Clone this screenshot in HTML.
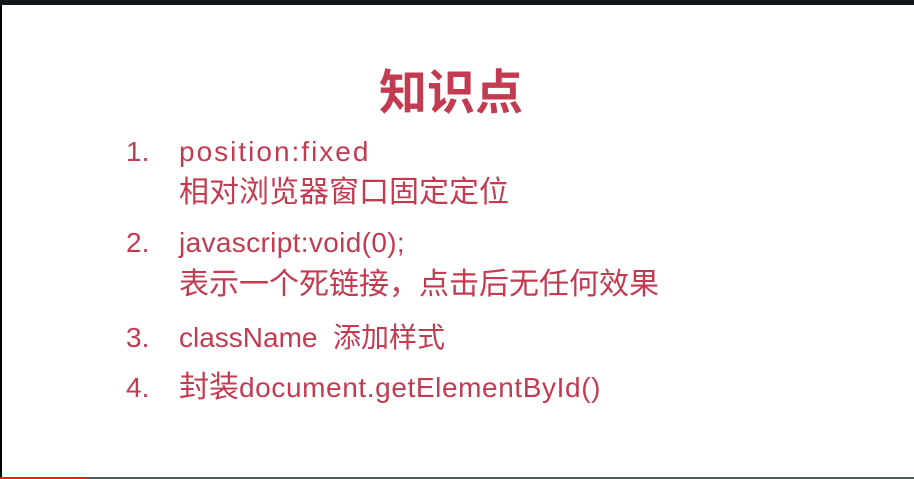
<!DOCTYPE html>
<html><head><meta charset="utf-8"><style>
html,body{margin:0;padding:0;width:914px;height:479px;overflow:hidden;background:#fff;}
.top{position:absolute;left:0;top:0;width:914px;height:5px;background:#12171b;}
.left{position:absolute;left:0;top:5px;width:2px;height:472px;background:#000;}
.b1{position:absolute;left:0;top:477px;width:87px;height:2px;background:#f0200f;}
.b2{position:absolute;left:87px;top:477px;width:827px;height:2px;background:#535a5e;}
.t{position:absolute;color:#c23b51;font-family:"Liberation Sans","Noto Sans CJK SC",sans-serif;font-size:28px;line-height:32px;white-space:nowrap;}
.z{font-size:30px;}
.h{position:absolute;left:379px;top:62px;color:#c23b51;font-family:"Noto Sans CJK SC",sans-serif;font-weight:bold;font-size:48px;line-height:52px;letter-spacing:0px;}
.n{left:126px}.c{left:179px}
</style></head><body>
<div class="top"></div><div class="left"></div><div class="b1"></div><div class="b2"></div>
<div class="h">知识点</div>
<div class="t n" style="top:136px">1.</div><div class="t c" style="top:136px;letter-spacing:2px">position:fixed</div>
<div class="t c z" style="top:177px">相对浏览器窗口固定定位</div>
<div class="t n" style="top:227px">2.</div><div class="t c" style="top:227px;letter-spacing:0.35px">javascript:void(0);</div>
<div class="t c z" style="top:269px">表示一个死链接，点击后无任何效果</div>
<div class="t n" style="top:322px">3.</div><div class="t c" style="top:322px">className&nbsp; 添加样式</div>
<div class="t n" style="top:372px">4.</div><div class="t c" style="top:372px"><span class="z">封装</span><span style="letter-spacing:0.6px">document.getElementById()</span></div>
</body></html>
